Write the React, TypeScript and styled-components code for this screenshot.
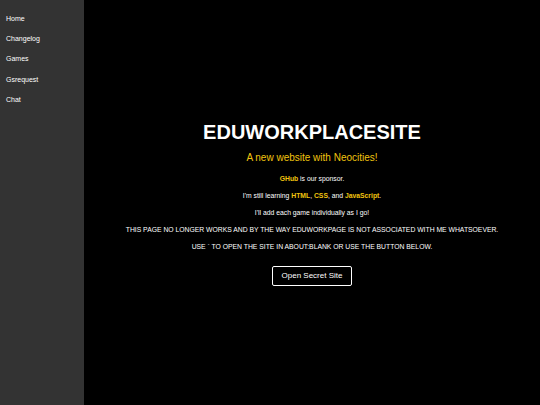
import React from "react";
import styled, { createGlobalStyle } from "styled-components";

const GlobalStyle = createGlobalStyle`
  html, body {
    margin: 0;
    padding: 0;
    background: #000;
  }
  body {
    font-family: "Liberation Sans", Arial, sans-serif;
  }
`;

const Page = styled.div`
  display: flex;
  width: 540px;
  height: 405px;
  background: #000;
  overflow: hidden;
`;

const Sidebar = styled.nav`
  width: 84px;
  flex-shrink: 0;
  background: #333;
  display: flex;
  flex-direction: column;
  padding-top: 14px;
  box-sizing: border-box;
`;

const NavLink = styled.a`
  display: block;
  height: 20.2px;
  line-height: 10px;
  padding-left: 6px;
  font-size: 7px;
  color: #fff;
  text-decoration: none;
`;

const Main = styled.main`
  flex: 1;
  display: flex;
  flex-direction: column;
  align-items: center;
  justify-content: center;
  color: #fff;
  text-align: center;
`;

const Title = styled.h1`
  margin: 0;
  font-size: 20px;
  line-height: 24px;
  font-weight: bold;
  color: #fff;
`;

const Subtitle = styled.h2`
  margin: 8px 0 0;
  font-size: 10px;
  line-height: 12px;
  font-weight: normal;
  color: #f1c40f;
`;

const Text = styled.p`
  margin: 8px 0 0;
  font-size: 6.8px;
  line-height: 9px;
  color: #fff;
  &:first-of-type {
    margin-top: 10px;
  }
`;

const Hl = styled.strong`
  color: #f1c40f;
  font-weight: bold;
`;

const Button = styled.button`
  margin-top: 15px;
  height: 20px;
  padding: 0 9px;
  background: transparent;
  border: 1px solid #fff;
  border-radius: 2px;
  color: #fff;
  font-family: "Liberation Sans", Arial, sans-serif;
  font-size: 8px;
  font-weight: normal;
  cursor: pointer;
`;

const links = ["Home", "Changelog", "Games", "Gsrequest", "Chat"];

export default function App() {
  return (
    <>
      <GlobalStyle />
      <Page>
        <Sidebar>
          {links.map((l) => (
            <NavLink key={l} href="#">
              {l}
            </NavLink>
          ))}
        </Sidebar>
        <Main>
          <Title>EDUWORKPLACESITE</Title>
          <Subtitle>A new website with Neocities!</Subtitle>
          <Text>
            <Hl>GHub</Hl> is our sponsor.
          </Text>
          <Text>
            I'm still learning <Hl>HTML</Hl>, <Hl>CSS</Hl>, and{" "}
            <Hl>JavaScript</Hl>.
          </Text>
          <Text>I'll add each game individually as I go!</Text>
          <Text>
            THIS PAGE NO LONGER WORKS AND BY THE WAY EDUWORKPAGE IS NOT
            ASSOCIATED WITH ME WHATSOEVER.
          </Text>
          <Text>USE ` TO OPEN THE SITE IN ABOUT:BLANK OR USE THE BUTTON BELOW.</Text>
          <Button>Open Secret Site</Button>
        </Main>
      </Page>
    </>
  );
}
